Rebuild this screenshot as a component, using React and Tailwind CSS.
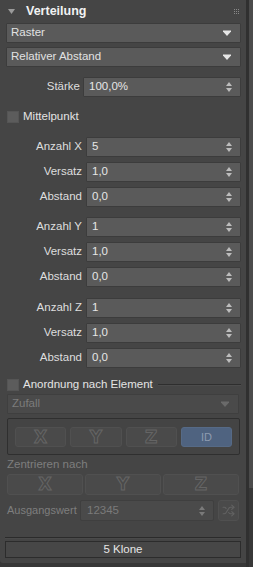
import React from 'react'
import { Shuffle } from 'lucide-react'

const font = { fontFamily: '"Liberation Sans", Arial, sans-serif' }

function DropArrow({ dim }) {
  return (
    <svg width="8" height="6" viewBox="0 0 8 6" className="shrink-0">
      <path d="M0 0.5h8v1L4 6 0 1.5z" fill={dim ? '#6a6a6a' : '#e6e6e6'} />
    </svg>
  )
}

function Spinner({ dim }) {
  const c = dim ? '#7a7a7a' : '#bdbdbd'
  return (
    <svg width="6" height="10" viewBox="0 0 6 10" className="shrink-0">
      <path d="M3 0L6 4H0z" fill={c} />
      <path d="M3 10L6 6H0z" fill={c} />
    </svg>
  )
}

function Dropdown({ label, dim }) {
  return (
    <div
      className={
        'h-[20px] flex items-center justify-between pl-[4px] pr-[9px] border rounded-[1px] ' +
        (dim ? 'bg-[#4a4a4a] border-[#3f3f3f] text-[#7c7c7c]' : 'bg-[#5a5a5a] border-[#3c3c3c] text-[#e2e2e2]')
      }
    >
      <span className="text-[11.5px] leading-none">{label}</span>
      <DropArrow dim={dim} />
    </div>
  )
}

function NumberRow({ label, value, labelW = 'w-[76px]', inputW = 'w-[155px]' }) {
  return (
    <div className="flex items-center h-[20px]">
      <span className={labelW + ' text-right text-[11.5px] text-[#dedede] shrink-0 whitespace-nowrap'}>{label}</span>
      <div
        className={
          inputW +
          ' ml-auto h-[20px] flex items-center justify-between pl-[5px] pr-[8px] bg-[#5a5a5a] border border-[#3c3c3c] rounded-[1px]'
        }
      >
        <span className="text-[11.5px] text-[#e6e6e6] leading-none">{value}</span>
        <Spinner />
      </div>
    </div>
  )
}

function Checkbox({ label }) {
  return (
    <div className="flex items-center h-[12px] pl-[1px]">
      <span className="w-[12px] h-[12px] bg-[#5c5c5c] border border-[#555] shrink-0" />
      <span className="ml-[4px] text-[11.5px] text-[#e4e4e4] whitespace-nowrap">{label}</span>
    </div>
  )
}

function Hollow({ children }) {
  return (
    <div className="h-full flex items-center justify-center bg-[#4a4a4a] border border-[#505050] rounded-[3px]">
      <span
        className="text-[17px] font-bold text-transparent [-webkit-text-stroke:1px_#656565] leading-none"
        style={{ fontFamily: '"DejaVu Sans", sans-serif' }}
      >
        {children}
      </span>
    </div>
  )
}

export default function App() {
  return (
    <div className="w-[253px] h-[567px] bg-[#373737] flex select-none" style={font}>
      <div className="w-[246px] h-[563px] bg-[#454545] rounded-bl-[3px] flex flex-col pl-[6px] pr-[5px]">
        <div className="h-[23px] flex items-center shrink-0">
          <svg width="7" height="5" viewBox="0 0 7 5" className="ml-[2px]">
            <path d="M0 0h7L3.5 5z" fill="#9a9a9a" />
          </svg>
          <span className="ml-[11px] text-[12.5px] font-bold text-[#f2f2f2]">Verteilung</span>
          <div className="ml-auto mr-[2px] grid grid-cols-3 gap-[1px]">
            {Array.from({ length: 9 }).map((_, i) => (
              <span key={i} className="w-[1px] h-[1px] bg-[#888]" />
            ))}
          </div>
        </div>

        <div className="flex flex-col gap-[4px]">
          <Dropdown label="Raster" />
          <Dropdown label="Relativer Abstand" />
        </div>

        <div className="mt-[10px]">
          <NumberRow label="Stärke" value="100,0%" labelW="w-[74px]" inputW="w-[158px]" />
        </div>

        <div className="mt-[14px]">
          <Checkbox label="Mittelpunkt" />
        </div>

        <div className="mt-[14px] flex flex-col gap-[5px]">
          <NumberRow label="Anzahl X" value="5" />
          <NumberRow label="Versatz" value="1,0" />
          <NumberRow label="Abstand" value="0,0" />
        </div>
        <div className="mt-[10px] flex flex-col gap-[5px]">
          <NumberRow label="Anzahl Y" value="1" />
          <NumberRow label="Versatz" value="1,0" />
          <NumberRow label="Abstand" value="0,0" />
        </div>
        <div className="mt-[11px] flex flex-col gap-[5px]">
          <NumberRow label="Anzahl Z" value="1" />
          <NumberRow label="Versatz" value="1,0" />
          <NumberRow label="Abstand" value="0,0" />
        </div>

        <div className="mt-[11px] flex items-center">
          <Checkbox label="Anordnung nach Element" />
          <div className="flex-1 ml-[5px] h-[2px] border-t border-[#2e2e2e] border-b border-b-[#4c4c4c]" />
        </div>

        <div className="mt-[3px] pl-[1px] pr-[2px]">
          <Dropdown label="Zufall" dim />
        </div>

        <div className="mt-[4px] ml-[1px] mr-[1px] h-[37px] border border-[#2f2f2f] rounded-[2px] bg-[#444] px-[7px] pt-[8px]">
          <div className="grid grid-cols-4 gap-[4px] h-[20px]">
            <Hollow>X</Hollow>
            <Hollow>Y</Hollow>
            <Hollow>Z</Hollow>
            <div className="h-full flex items-center justify-center bg-[#4f6380] border border-[#566a86] rounded-[3px]">
              <span className="text-[11px] text-[#8e9bb0]">ID</span>
            </div>
          </div>
        </div>

        <div className="h-[19px] flex items-center pl-[1px]">
          <span className="text-[11.5px] text-[#7e7e7e]">Zentrieren nach</span>
        </div>

        <div className="ml-[1px] mr-[2px] h-[21px] grid grid-cols-3 gap-[2px]">
          <Hollow>X</Hollow>
          <Hollow>Y</Hollow>
          <Hollow>Z</Hollow>
        </div>

        <div className="mt-[5px] ml-[1px] mr-[2px] h-[21px] flex items-center">
          <span className="text-[11px] text-[#7e7e7e] w-[73px] shrink-0 whitespace-nowrap">Ausgangswert</span>
          <div className="w-[134px] h-[21px] flex items-center justify-between pl-[6px] pr-[8px] bg-[#4a4a4a] border border-[#3f3f3f] rounded-[2px]">
            <span className="text-[11.5px] text-[#7a7a7a]">12345</span>
            <Spinner dim />
          </div>
          <div className="ml-auto w-[21px] h-[21px] flex items-center justify-center bg-[#4a4a4a] border border-[#505050] rounded-[3px]">
            <Shuffle size={13} color="#626262" strokeWidth={2} />
          </div>
        </div>

        <div className="mt-[16px] -ml-[1px] h-[2px] border-t border-[#2b2b2b] border-b border-b-[#4a4a4a]" />

        <div className="mt-[2px] -ml-[1px] h-[17px] flex items-center justify-center border border-[#2c2c2c] bg-[#474747]">
          <span className="text-[11.5px] text-[#e6e6e6] leading-none">5 Klone</span>
        </div>
      </div>
      <div className="w-[3px] h-full bg-[#303030]" />
      <div className="w-[4px] h-full flex flex-col">
        <div className="h-[488px] bg-[#4b4b4b]" />
        <div className="flex-1 bg-[#383838]" />
      </div>
    </div>
  )
}
